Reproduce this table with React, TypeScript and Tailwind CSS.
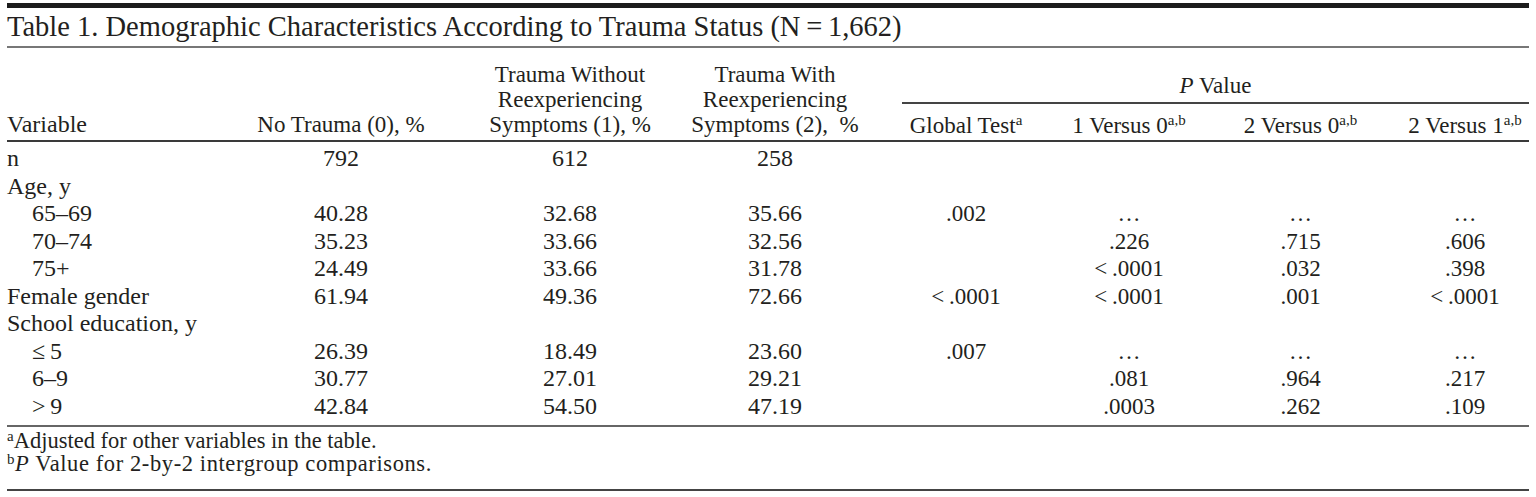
import React from "react";

const cols = "grid grid-cols-[220px_228px_230px_180px_37px_128px_198px_173px_128px]";

type Row = {
  label: string;
  indent?: boolean;
  v: string[];
};

const TS = "\u2009";
const rows: Row[] = [
  { label: "n", v: ["792", "612", "258", "", "", "", ""] },
  { label: "Age, y", v: ["", "", "", "", "", "", ""] },
  { label: "65–69", indent: true, v: ["40.28", "32.68", "35.66", ".002", "…", "…", "…"] },
  { label: "70–74", indent: true, v: ["35.23", "33.66", "32.56", "", ".226", ".715", ".606"] },
  { label: "75+", indent: true, v: ["24.49", "33.66", "31.78", "", `<${TS}.0001`, ".032", ".398"] },
  { label: "Female gender", v: ["61.94", "49.36", "72.66", `<${TS}.0001`, `<${TS}.0001`, ".001", `<${TS}.0001`] },
  { label: "School education, y", v: ["", "", "", "", "", "", ""] },
  { label: `≤${TS}5`, indent: true, v: ["26.39", "18.49", "23.60", ".007", "…", "…", "…"] },
  { label: "6–9", indent: true, v: ["30.77", "27.01", "29.21", "", ".081", ".964", ".217"] },
  { label: `>${TS}9`, indent: true, v: ["42.84", "54.50", "47.19", "", ".0003", ".262", ".109"] },
];

function Sup({ children }: { children: React.ReactNode }) {
  return <sup className="text-[15px] top-[-0.55em]">{children}</sup>;
}

export default function App() {
  return (
    <div className="w-[1536px] h-[497px] bg-white text-[#231f20] font-['Liberation_Serif',serif] overflow-hidden">
      <div className="ml-[7px] w-[1522px] pt-[3px]">
        <div className="h-[5px] bg-[#1c1c1c]" />
        <div className="h-[38px] text-[28.5px] leading-[38px] whitespace-nowrap">
          Table 1. Demographic Characteristics According to Trauma Status (N{TS}={TS}1,662)
        </div>
        <div className="h-[2px] bg-[#777]" />

        {/* header */}
        <div className={`${cols} grid-rows-[56px_36px] text-[23px] leading-[25px] whitespace-nowrap`}>
          <div className="row-span-2 flex items-end pb-[3px] text-[24px]">Variable</div>
          <div className="row-span-2 flex items-end justify-center pb-[3px]">No Trauma (0), %</div>
          <div className="row-span-2 flex flex-col items-center justify-end pb-[3px]">
            <span>Trauma Without</span>
            <span>Reexperiencing</span>
            <span>Symptoms (1), %</span>
          </div>
          <div className="row-span-2 flex flex-col items-center justify-end pb-[3px]">
            <span>Trauma With</span>
            <span>Reexperiencing</span>
            <span>Symptoms (2),{"\u00a0"} %</span>
          </div>
          <div className="row-span-2" />
          <div className="col-span-4 flex items-end justify-center pb-[4px] border-b-2 border-[#444]">
            <span>
              <i>P</i> Value
            </span>
          </div>
          <div className="flex items-end justify-center pb-[2px]">
            <span>
              Global Test<Sup>a</Sup>
            </span>
          </div>
          <div className="flex items-end justify-center pb-[2px]">
            <span>
              1 Versus 0<Sup>a,b</Sup>
            </span>
          </div>
          <div className="flex items-end justify-center pb-[2px] pr-[28px]">
            <span>
              2 Versus 0<Sup>a,b</Sup>
            </span>
          </div>
          <div className="flex items-end justify-center pb-[2px]">
            <span>
              2 Versus 1<Sup>a,b</Sup>
            </span>
          </div>
        </div>
        <div className="h-[2px] bg-[#3a3a3a]" />

        {/* body */}
        <div className="pt-[3px] pb-[5px] text-[24px]">
          {rows.map((r, i) => (
            <div key={i} className={`${cols} h-[27.5px] leading-[27.5px] whitespace-nowrap`}>
              <div className={r.indent ? "pl-[25px]" : ""}>{r.label}</div>
              <div className="text-center">{r.v[0]}</div>
              <div className="text-center">{r.v[1]}</div>
              <div className="text-center">{r.v[2]}</div>
              <div />
              <div className="text-center text-[23px]">{r.v[3]}</div>
              <div className="text-center text-[23px]">{r.v[4]}</div>
              <div className="text-center text-[23px] pr-[28px]">{r.v[5]}</div>
              <div className="text-center text-[23px]">{r.v[6]}</div>
            </div>
          ))}
        </div>
        <div className="h-[2px] bg-[#666]" />

        {/* footnotes */}
        <div className="pt-[2px] pb-[14px] text-[22.5px] leading-[23px] whitespace-nowrap">
          <div>
            <sup className="text-[15px] top-[-0.45em]">a</sup>Adjusted for other variables in the table.
          </div>
          <div className="tracking-[0.6px]">
            <sup className="text-[15px] top-[-0.45em]">b</sup>
            <i>P</i> Value for 2-by-2 intergroup comparisons.
          </div>
        </div>
        <div className="h-[2px] bg-[#444]" />
      </div>
    </div>
  );
}
